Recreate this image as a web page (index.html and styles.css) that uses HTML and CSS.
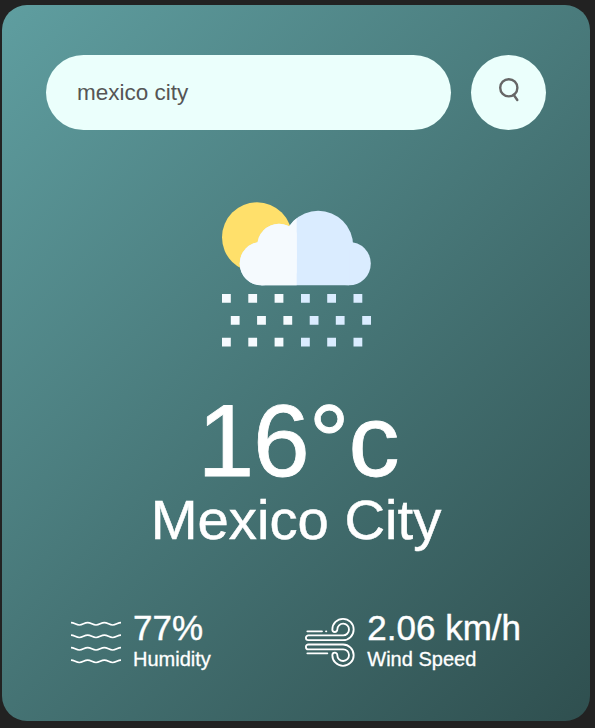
FILE: index.html
```html
<!DOCTYPE html>
<html lang="en">
<head>
<meta charset="utf-8">
<title>Weather</title>
<link rel="stylesheet" href="styles.css">
</head>
<body>
<main class="card">
  <form class="search">
    <input class="search-input" type="text" value="mexico city" spellcheck="false" aria-label="City">
    <button class="search-button" type="button" aria-label="Search">
      <svg class="search-icon" viewBox="0 0 24 28"><circle cx="11.8" cy="11.8" r="8.6"/><path d="M16.6 18.800l3.700 5.200"/></svg>
    </button>
  </form>
  <section class="weather">
    <svg class="weather-icon" viewBox="0 0 150 150">
      <defs>
        <clipPath id="left"><rect width="74.7" height="150"/></clipPath>
        <g id="cloud">
          <circle cx="39.4" cy="63.6" r="21.7"/>
          <circle cx="57" cy="45.5" r="21.7"/>
          <circle cx="96.2" cy="45.8" r="35"/>
          <circle cx="127.1" cy="63.6" r="21.7"/>
          <path d="M39.4 50H127.1V85.3H39.4z"/>
        </g>
      </defs>
      <circle cx="35" cy="37.3" r="35" fill="#ffe06b"/>
      <use href="#cloud" fill="#daecff"/>
      <use href="#cloud" fill="#f5fafe" clip-path="url(#left)"/>
      <path fill="#f5fafe" d="M0 94h8.8v8.8H0zM26.3 94h8.8v8.8h-8.8zM52.6 94h8.8v8.8h-8.8zM8.8 115.9h8.8v8.8H8.8zM35.1 115.9h8.8v8.8h-8.8zM61.4 115.9h8.8v8.8h-8.8zM0 137.8h8.8v8.8H0zM26.3 137.8h8.8v8.8h-8.8zM52.6 137.8h8.8v8.8h-8.8z"/>
      <path fill="#daecff" d="M79 94h8.8v8.8H79zM105.2 94h8.8v8.8h-8.8zM131.5 94h8.8v8.8h-8.8zM87.7 115.9h8.8v8.8h-8.8zM113.8 115.9h8.8v8.8h-8.8zM140.2 115.9h8.8v8.8h-8.8zM79 137.8h8.8v8.8H79zM105.2 137.8h8.8v8.8h-8.8zM131.5 137.8h8.8v8.8h-8.8z"/>
    </svg>
    <h1 class="temp">16°c</h1>
    <h2 class="city">Mexico City</h2>
  </section>
  <section class="details">
    <div class="detail">
      <svg class="detail-icon" viewBox="0 0 150 150">
        <defs><path id="wave" d="M0 -3.500C10 -3.500 15 3.500 25 3.500S40 -3.500 50 -3.500S65 3.500 75 3.500S90 -3.500 100 -3.500S115 3.500 125 3.500S140 -3.500 150 -3.500"/></defs>
        <g class="waves"><use href="#wave" y="17.5"/><use href="#wave" y="55"/><use href="#wave" y="92.5"/><use href="#wave" y="130"/></g>
      </svg>
      <div>
        <p class="value">77%</p>
        <p class="label">Humidity</p>
      </div>
    </div>
    <div class="detail">
      <svg class="detail-icon" viewBox="30 39 150 150">
        <g class="wind">
          <path d="M40 91H144A17.5 17.5 0 1 0 127 73.500a7.500 7.500 0 0 1-15 0A32 32 0 1 1 144 105.500H40a7.200 7.200 0 0 1 0-14.500z"/>
          <path d="M40 133H144A17.500 17.500 0 1 1 127 150.500a7.500 7.500 0 0 0-15 0A32 32 0 1 0 144 118.500H40a7.200 7.200 0 0 0 0 14.500z"/>
          <path d="M37 79H81M93 79h1M37 145H97"/>
        </g>
      </svg>
      <div>
        <p class="value">2.06 km/h</p>
        <p class="label">Wind Speed</p>
      </div>
    </div>
  </section>
</main>
</body>
</html>
```
FILE: styles.css
```css
* {
  box-sizing: border-box;
  margin: 0;
  padding: 0;
  font-family: "Liberation Sans", Arial, sans-serif;
}
body {
  background: #222;
  padding: 5px 0 0 2px;
  overflow: hidden;
}
.card {
  width: 588px;
  height: 716px;
  padding: 50px 44px;
  border-radius: 25px;
  background: linear-gradient(135deg, #5f9ea0, #2f4f4f);
  color: #fff;
}
.search {
  display: flex;
  gap: 20px;
}
.search-input {
  flex: 1;
  min-width: 0;
  height: 75px;
  padding: 0 31px;
  border: 0;
  outline: 0;
  border-radius: 38px;
  background: #ebfffc;
  color: #555;
  font-size: 22.5px;
}
.search-button {
  display: flex;
  justify-content: center;
  width: 75px;
  height: 75px;
  padding-top: 21px;
  border: 0;
  border-radius: 50%;
  background: #ebfffc;
}
.search-icon {
  width: 24px;
  height: 28px;
  fill: none;
  stroke: #666;
  stroke-width: 2.4;
  stroke-linecap: round;
}
.weather {
  display: flex;
  flex-direction: column;
  align-items: center;
  margin-top: 70px;
}
.weather-icon {
  width: 150px;
  height: 150px;
  margin-left: 2px;
}
.temp {
  margin-top: 41px;
  padding-left: 4px;
  font-size: 102px;
  line-height: 100px;
  letter-spacing: -1px;
  font-weight: 400;
  -webkit-text-stroke: 0.8px #fff;
}
.city {
  margin-top: 1px;
  font-size: 56.25px;
  line-height: 56px;
  font-weight: 400;
  -webkit-text-stroke: 0.5px #fff;
}
.details {
  display: flex;
  justify-content: space-between;
  margin-top: 62px;
  padding: 0 25px;
}
.detail {
  display: flex;
  align-items: flex-start;
  gap: 12px;
}
.detail-icon {
  width: 50px;
  height: 50px;
  margin-top: 8px;
  overflow: visible;
  fill: none;
  stroke: #fff;
  stroke-width: 5.5;
  stroke-linecap: round;
}
.waves {
  stroke-width: 4.8;
  stroke-linecap: butt;
}
.value {
  font-size: 35px;
  line-height: 35px;
  -webkit-text-stroke: 0.4px #fff;
}
.label {
  margin-top: 4px;
  font-size: 20px;
  line-height: 20px;
  -webkit-text-stroke: 0.3px #fff;
}
```
